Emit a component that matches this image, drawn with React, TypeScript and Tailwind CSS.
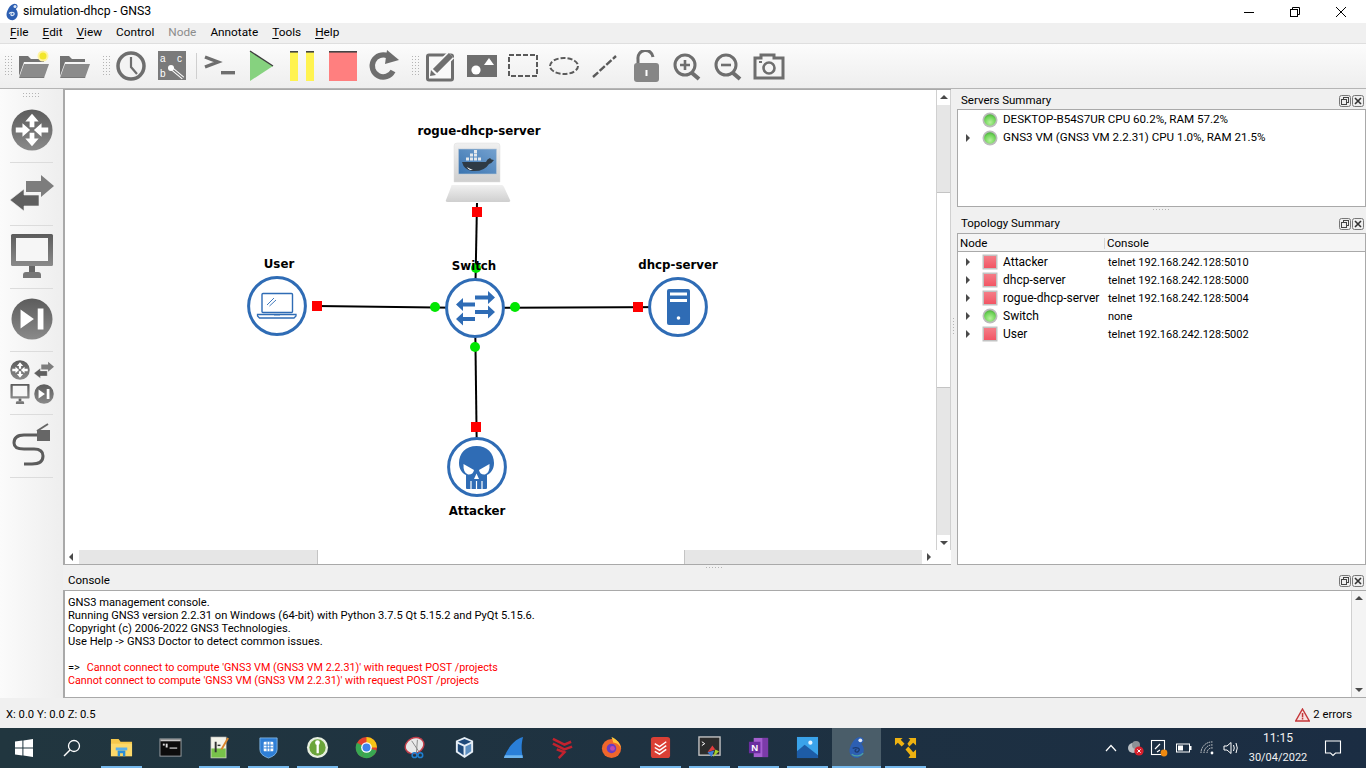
import type { ReactNode } from "react";

const GRAY = "#6e6e6e";
const BLUE = "#2f6cb5";

function Grip({ cols, rows }: { cols: number; rows: number }) {
  const dots: ReactNode[] = [];
  for (let c = 0; c < cols; c++)
    for (let r = 0; r < rows; r++) dots.push(<rect key={`${c}-${r}`} x={c * 3} y={r * 3} width="1" height="1" fill="#b4b4b4" />);
  return (
    <svg width={cols * 3} height={rows * 3} className="shrink-0">
      {dots}
    </svg>
  );
}

function Ico({ children, box = 32, size = 32 }: { children: ReactNode; box?: number; size?: number }) {
  return (
    <svg width={size} height={size} viewBox={`0 0 ${box} ${box}`} className="shrink-0">
      {children}
    </svg>
  );
}

/* ---------- toolbar icons ---------- */
const FolderShape = () => (
  <>
    <path d="M1 26 V6 H10 L13 9 H26 V12 H6 L1 26 Z" fill="#737373" />
    <path d="M6 14 H31 L26 28 H1 Z" fill="#8b8b8b" />
    <path d="M1.5 27.6 H26 L26.3 27 H2 Z" fill="#666" />
  </>
);

const toolbarIcons: Record<string, ReactNode> = {
  newProject: (
    <Ico>
      <FolderShape />
      <circle cx="25" cy="6" r="5.5" fill="#fff3a0" />
      <circle cx="25" cy="6" r="3.5" fill="#f2e62a" />
    </Ico>
  ),
  open: (
    <Ico>
      <FolderShape />
    </Ico>
  ),
  clock: (
    <Ico>
      <circle cx="16" cy="16" r="13" fill="#f3f3f3" stroke={GRAY} strokeWidth="3.5" />
      <path d="M16 7 V17 L22 24" fill="none" stroke={GRAY} strokeWidth="2.2" />
    </Ico>
  ),
  abc: (
    <Ico>
      <rect x="2" y="1" width="28" height="29" fill="#7a7a7a" />
      <text x="4" y="12" fontSize="10" fill="#fff" fontFamily="Liberation Sans">a</text>
      <text x="21" y="12" fontSize="10" fill="#fff" fontFamily="Liberation Sans">c</text>
      <text x="4" y="27" fontSize="10" fill="#fff" fontFamily="Liberation Sans">b</text>
      <path d="M15 18 L27 28" stroke="#fff" strokeWidth="3.5" />
      <path d="M15 18 L27 28" stroke="#7a7a7a" strokeWidth="1.4" />
      <circle cx="15" cy="18" r="3" fill="#fff" />
    </Ico>
  ),
  terminal: (
    <Ico>
      <path d="M2 7 L15 12 L2 17" fill="none" stroke={GRAY} strokeWidth="3.4" />
      <rect x="18" y="21" width="14" height="3.4" fill={GRAY} />
    </Ico>
  ),
  play: (
    <Ico>
      <polygon points="6,1 29,16 6,31" fill="#86d27f" />
      <path d="M6 1 L29 16" stroke="#3d3d3d" strokeWidth="1.3" />
    </Ico>
  ),
  pause: (
    <Ico>
      <rect x="5" y="1" width="8" height="30" fill="#fff350" />
      <rect x="21" y="1" width="8" height="30" fill="#fff350" />
      <rect x="5" y="1" width="8" height="1.6" fill="#444" />
      <rect x="21" y="1" width="8" height="1.6" fill="#444" />
    </Ico>
  ),
  stop: (
    <Ico>
      <rect x="3" y="1" width="28" height="30" fill="#ff7f7f" />
      <rect x="3" y="1" width="28" height="1.6" fill="#444" />
    </Ico>
  ),
  reload: (
    <Ico>
      <path d="M26 21 A11 11 0 1 1 21 6" fill="none" stroke={GRAY} strokeWidth="5.4" />
      <polygon points="20,0 32,10 18,14" fill={GRAY} />
    </Ico>
  ),
  note: (
    <Ico>
      <rect x="2.5" y="5" width="25" height="25" rx="1.5" fill="#f8f8f8" stroke={GRAY} strokeWidth="3" />
      <path d="M9 22 L26 5" stroke="#f8f8f8" strokeWidth="9" />
      <path d="M10 21 L26 5" stroke={GRAY} strokeWidth="6" />
      <polygon points="5,26 6,20 11,25" fill={GRAY} />
    </Ico>
  ),
  picture: (
    <Ico>
      <rect x="1" y="5" width="30" height="22" fill={GRAY} />
      <circle cx="10" cy="20" r="4.6" fill="#fff" />
      <polygon points="23,8 28,15 18,15" fill="#fff" />
    </Ico>
  ),
  rect: (
    <Ico>
      <rect x="2" y="5" width="28" height="21" fill="none" stroke="#5a5a5a" strokeWidth="2" strokeDasharray="5 2" />
    </Ico>
  ),
  ellipse: (
    <Ico>
      <ellipse cx="16" cy="16" rx="14" ry="8" fill="none" stroke="#5a5a5a" strokeWidth="2" strokeDasharray="5 2" />
    </Ico>
  ),
  line: (
    <Ico>
      <path d="M4 27 L27 6" fill="none" stroke="#5a5a5a" strokeWidth="2.4" strokeDasharray="7 2" />
    </Ico>
  ),
  lock: (
    <Ico>
      <path d="M8 15 V9 A7.5 7.5 0 0 1 23 7" fill="none" stroke={GRAY} strokeWidth="3" />
      <rect x="4" y="13" width="25" height="19" rx="3" fill="#868686" />
      <rect x="15.5" y="20" width="2" height="6" fill="#fff" />
    </Ico>
  ),
  zoomIn: (
    <Ico>
      <circle cx="14" cy="15" r="10" fill="#f5f5f5" stroke={GRAY} strokeWidth="3" />
      <path d="M21 23 L28 29" stroke={GRAY} strokeWidth="4" />
      <path d="M9 15 H19 M14 10 V20" stroke={GRAY} strokeWidth="2.6" />
    </Ico>
  ),
  zoomOut: (
    <Ico>
      <circle cx="14" cy="15" r="10" fill="#f5f5f5" stroke={GRAY} strokeWidth="3" />
      <path d="M21 23 L28 29" stroke={GRAY} strokeWidth="4" />
      <path d="M9 15 H19" stroke={GRAY} strokeWidth="2.6" />
    </Ico>
  ),
  camera: (
    <Ico>
      <path d="M2 8 H8 V5 H21 V8 H30 V28 H2 Z" fill="#f5f5f5" stroke={GRAY} strokeWidth="3" />
      <circle cx="16" cy="18" r="5.5" fill="none" stroke={GRAY} strokeWidth="2.6" />
      <rect x="6" y="11" width="3" height="2" fill={GRAY} />
    </Ico>
  ),
};

function ToolGroup({ names, className }: { names: string[]; className: string }) {
  return (
    <div className={`flex h-full ${className}`}>
      {names.map((n) => (
        <div key={n} className="flex h-full w-[41px] items-center justify-center">
          {toolbarIcons[n]}
        </div>
      ))}
    </div>
  );
}

/* ---------- left dock icons ---------- */
const DockDefs = () => (
  <svg width="0" height="0" className="absolute">
    <defs>
      <linearGradient id="dockGray" x1="0" y1="0" x2="0" y2="1">
        <stop offset="0" stopColor="#5c5c5c" />
        <stop offset="1" stopColor="#8a8a8a" />
      </linearGradient>
      <linearGradient id="lapBezel" x1="0" y1="0" x2="0" y2="1">
        <stop offset="0" stopColor="#f0f0f0" />
        <stop offset="1" stopColor="#cfcfcf" />
      </linearGradient>
      <linearGradient id="lapScreen" x1="0" y1="1" x2="1" y2="0">
        <stop offset="0" stopColor="#3a74b0" />
        <stop offset="1" stopColor="#74a1cf" />
      </linearGradient>
      <radialGradient id="ballGreen" cx="0.5" cy="0.7" r="0.8">
        <stop offset="0" stopColor="#b6f29c" />
        <stop offset="0.6" stopColor="#6fd458" />
        <stop offset="1" stopColor="#3a9c2e" />
      </radialGradient>
      <linearGradient id="squareRed" x1="0" y1="0" x2="0" y2="1">
        <stop offset="0" stopColor="#f47d87" />
        <stop offset="1" stopColor="#f25564" />
      </linearGradient>
    </defs>
  </svg>
);

function RouterGlyph({ size }: { size: number }) {
  return (
    <Ico box={44} size={size}>
      <circle cx="22" cy="22" r="21.5" fill="url(#dockGray)" />
      <g fill="#fff">
        <polygon points="22,5 29,13 24.5,13 24.5,19 19.5,19 19.5,13 15,13" />
        <polygon points="22,39 29,31 24.5,31 24.5,25 19.5,25 19.5,31 15,31" />
        <polygon points="20,22 12,15 12,19.5 5,19.5 5,24.5 12,24.5 12,29" />
        <polygon points="24,22 32,15 32,19.5 39,19.5 39,24.5 32,24.5 32,29" />
      </g>
    </Ico>
  );
}

function SwitchGlyph({ size }: { size: number }) {
  return (
    <Ico box={44} size={size}>
      <polygon points="16,10 31,10 31,4 44,15 31,26 31,21 16,21" fill="#7d7d7d" />
      <polygon points="0,29 14,18 14,24 29,24 29,35 14,35 14,40" fill="#5f5f5f" stroke="#f2f2f2" strokeWidth="0.6" />
    </Ico>
  );
}

function MonitorGlyph({ size }: { size: number }) {
  return (
    <Ico box={44} size={size}>
      <rect x="1" y="0" width="42" height="32" rx="1.5" fill="url(#dockGray)" />
      <rect x="6" y="4" width="32" height="23" fill="#f6f6f6" />
      <rect x="19" y="32" width="6" height="6" fill="#666" />
      <path d="M13 44 V41 Q13 38 16 38 H28 Q31 38 31 41 V44 Z" fill="#777" />
    </Ico>
  );
}

function EndGlyph({ size }: { size: number }) {
  return (
    <Ico box={44} size={size}>
      <circle cx="22" cy="22" r="21.5" fill="url(#dockGray)" />
      <polygon points="10,12 24,22 10,32" fill="#fff" />
      <rect x="28" y="11" width="6" height="22" fill="#fff" />
    </Ico>
  );
}

function CableGlyph() {
  return (
    <Ico box={44} size={44}>
      <path d="M28 12 H14 Q4 12 4 20 Q4 26 14 26 H24 Q33 26 33 33 Q33 41 22 41 H14" fill="none" stroke="#5c5c5c" strokeWidth="3" />
      <rect x="27" y="7" width="13" height="11" fill="#666" />
      <path d="M27 8 L38 1" stroke="#666" strokeWidth="2" />
    </Ico>
  );
}

function LeftDock() {
  const cell = "flex h-[63px] items-center justify-center border-b border-[#dcdcdc] pb-[2px]";
  return (
    <div className="flex w-[63px] shrink-0 flex-col bg-gradient-to-r from-[#fbfbfb] to-[#eeeeee]">
      <div className="flex h-[11px] items-center justify-center pt-[3px]">
        <Grip cols={6} rows={2} />
      </div>
      <div className="mx-[10px] flex flex-col">
        <div className={cell}>
          <RouterGlyph size={42} />
        </div>
        <div className={cell}>
          <SwitchGlyph size={44} />
        </div>
        <div className={cell}>
          <MonitorGlyph size={44} />
        </div>
        <div className={cell}>
          <EndGlyph size={42} />
        </div>
        <div className={cell}>
          <div className="grid grid-cols-2 gap-x-[4px] gap-y-[4px]">
            <RouterGlyph size={20} />
            <SwitchGlyph size={20} />
            <MonitorGlyph size={20} />
            <EndGlyph size={20} />
          </div>
        </div>
        <div className={cell}>
          <CableGlyph />
        </div>
      </div>
    </div>
  );
}

/* ---------- topology nodes ---------- */
function NodeRing({ children }: { children: ReactNode }) {
  return (
    <svg width="60" height="60" viewBox="0 0 60 60">
      <circle cx="30" cy="30" r="28.4" fill="#fff" stroke={BLUE} strokeWidth="3" />
      {children}
    </svg>
  );
}

const NodeSwitch = () => (
  <NodeRing>
    <g fill={BLUE}>
      <polygon points="30,17.5 43,17.5 43,13 50,19.5 43,26 43,21.5 30,21.5" />
      <polygon points="30,24.5 18,24.5 18,20 11,26.5 18,33 18,28.5 30,28.5" />
      <polygon points="30,32 43,32 43,27.5 50,34 43,40.5 43,36 30,36" />
      <polygon points="30,39 18,39 18,34.5 11,41 18,47.5 18,43 30,43" />
    </g>
  </NodeRing>
);

const NodeLaptop = () => (
  <NodeRing>
    <rect x="15" y="17.5" width="30.5" height="19" rx="1" fill="none" stroke={BLUE} strokeWidth="1.4" />
    <path d="M20 29 L27 22 M22.5 30 L29 24" stroke={BLUE} strokeWidth="0.9" />
    <path d="M10.5 38.5 H49 V40 L47 42 H12.5 L10.5 40 Z" fill="#fff" stroke={BLUE} strokeWidth="1.3" />
    <rect x="27" y="38" width="6" height="1.4" fill={BLUE} />
  </NodeRing>
);

const NodeServer = () => (
  <NodeRing>
    <rect x="19" y="12" width="23" height="36" rx="2" fill={BLUE} />
    <rect x="22" y="15.5" width="17" height="3" fill="#fff" />
    <rect x="22" y="22" width="17" height="3" fill="#fff" />
    <circle cx="30.5" cy="41" r="1.8" fill="#fff" />
  </NodeRing>
);

const NodeSkull = () => (
  <NodeRing>
    <path
      d="M29.5 9 C19 9 12 16 12 26 C12 32 15 36 19 38 V51 Q19 52 20 52 H39 Q40 52 40 51 V38 C44 36 47 32 47 26 C47 16 40 9 29.5 9 Z"
      fill={BLUE}
    />
    <path d="M16.5 27 L27 33 Q26 38 21 37.5 Q16 36 16.5 27 Z" fill="#fff" />
    <path d="M42.5 27 L32 33 Q33 38 38 37.5 Q43 36 42.5 27 Z" fill="#fff" />
    <path d="M29.5 36.5 L32 42 H27 Z" fill="#fff" />
    <path d="M24 44 V52 M29.5 44 V52 M35 44 V52" stroke="#fff" strokeWidth="1.2" />
  </NodeRing>
);

const DockerLaptop = () => (
  <svg width="66" height="62" viewBox="0 0 66 62">
    <path d="M12 1 H52 Q55 1 55 4 V40 H9 V4 Q9 1 12 1 Z" fill="url(#lapBezel)" stroke="#dcdcdc" strokeWidth="0.5" />
    <rect x="13.5" y="7" width="38" height="25" fill="url(#lapScreen)" stroke="#b9c8d8" strokeWidth="0.6" />
    <path d="M17 20 H41 Q42 17 45 16 Q46 18 49 18 Q47 21 44 22 Q39 30 27 29 Q19 28 17 20 Z" fill="#2e3a45" />
    <path d="M22 25 Q25 27 28 27.5 L25 28 Q23 27 22 25 Z" fill="#fff" />
    <g fill="#e4e8ec">
      <rect x="21" y="15.5" width="3" height="3" />
      <rect x="25" y="15.5" width="3" height="3" />
      <rect x="29" y="15.5" width="3" height="3" />
      <rect x="33" y="15.5" width="3" height="3" />
      <rect x="25" y="11.5" width="3" height="3" />
      <rect x="29" y="11.5" width="3" height="3" />
      <rect x="29" y="8" width="3" height="3" />
    </g>
    <path d="M7 43 H57 Q58 43 59 45 L65 58 Q66 60 63 60 H3 Q0 60 1 58 L6 45 Q6 43 7 43 Z" fill="url(#lapBezel)" />
  </svg>
);

function Wires() {
  const wires = [
    [412, 113, 410, 218],
    [252, 216, 410, 218],
    [410, 218, 613, 217],
    [410, 218, 412, 377],
  ];
  const reds = [
    [407, 117],
    [247, 211],
    [568, 212],
    [406, 332],
  ];
  const greens = [
    [411, 178],
    [370, 217],
    [450, 217],
    [410, 257],
  ];
  return (
    <svg width="871" height="460" className="absolute inset-0">
      {wires.map(([a, b, c, d], i) => (
        <line key={i} x1={a} y1={b} x2={c} y2={d} stroke="#000" strokeWidth="2" />
      ))}
      {reds.map(([x, y], i) => (
        <rect key={i} x={x} y={y} width="10" height="10" fill="#ff0000" />
      ))}
      {greens.map(([x, y], i) => (
        <circle key={i} cx={x} cy={y} r="5" fill="#00e600" />
      ))}
    </svg>
  );
}

function Arrow({ dir }: { dir: "up" | "down" | "left" | "right" }) {
  const pts = {
    up: "1,6 9,6 5,2",
    down: "1,3 9,3 5,7",
    left: "6,1 6,9 2,5",
    right: "3,1 3,9 7,5",
  }[dir];
  return (
    <svg width="10" height="10" viewBox="0 0 10 10">
      <polygon points={pts} fill="#4a4a4a" />
    </svg>
  );
}

function Canvas() {
  const label = "absolute -translate-x-1/2 whitespace-nowrap font-['DejaVu_Sans',sans-serif] text-[11.8px] leading-[16px] font-bold text-black";
  return (
    <div className="flex h-[476px] w-[888px] shrink-0 flex-col border-y border-l-2 border-[#a9a9a9] bg-white">
      <div className="flex h-[460px] shrink-0">
        <div className="relative w-[871px] shrink-0 overflow-hidden">
          <Wires />
          <div className="absolute top-[52px] left-[380px]">
            <DockerLaptop />
          </div>
          <div className="absolute top-[186px] left-[182px]">
            <NodeLaptop />
          </div>
          <div className="absolute top-[188px] left-[380px]">
            <NodeSwitch />
          </div>
          <div className="absolute top-[187px] left-[583px]">
            <NodeServer />
          </div>
          <div className="absolute top-[347px] left-[382px]">
            <NodeSkull />
          </div>
          <div className={`${label} top-[33px] left-[414px]`}>rogue-dhcp-server</div>
          <div className={`${label} top-[166px] left-[214px]`}>User</div>
          <div className={`${label} top-[168px] left-[409px]`}>Switch</div>
          <div className={`${label} top-[167px] left-[613px]`}>dhcp-server</div>
          <div className={`${label} top-[413px] left-[412px]`}>Attacker</div>
        </div>
        <div className="flex w-[15px] shrink-0 flex-col border-x border-[#d0d0d0] bg-[#e6e6e6]">
          <div className="flex h-[15px] items-center justify-center bg-white">
            <Arrow dir="up" />
          </div>
          <div className="h-[87px] shrink-0" />
          <div className="h-[196px] shrink-0 border-y border-[#c4c4c4] bg-white" />
          <div className="flex-1" />
          <div className="flex h-[15px] items-center justify-center bg-white">
            <Arrow dir="down" />
          </div>
        </div>
      </div>
      <div className="flex h-[14px] shrink-0 bg-[#e6e6e6]">
        <div className="flex w-[14px] items-center justify-center bg-white">
          <Arrow dir="left" />
        </div>
        <div className="w-[238px] shrink-0" />
        <div className="w-[368px] shrink-0 border-x border-[#c4c4c4] bg-white" />
        <div className="flex-1" />
        <div className="flex w-[14px] items-center justify-center bg-white">
          <Arrow dir="right" />
        </div>
        <div className="w-[15px] bg-white" />
      </div>
    </div>
  );
}

/* ---------- right side ---------- */
function PanelButtons() {
  return (
    <div className="flex gap-[1px]">
      <svg width="12" height="12" viewBox="0 0 12 12">
        <rect x="0.5" y="0.5" width="11" height="11" rx="2" fill="#eee" stroke="#777" />
        <rect x="4.5" y="2.5" width="5" height="5" fill="none" stroke="#444" />
        <rect x="2.5" y="4.5" width="5" height="5" fill="#eee" stroke="#444" />
      </svg>
      <svg width="12" height="12" viewBox="0 0 12 12">
        <rect x="0.5" y="0.5" width="11" height="11" rx="2" fill="#eee" stroke="#777" />
        <path d="M3 3 L9 9 M9 3 L3 9" stroke="#333" strokeWidth="1.6" />
      </svg>
    </div>
  );
}

function DockTitle({ title, cls }: { title: string; cls: string }) {
  return (
    <div className={`flex shrink-0 items-center justify-between pr-[2px] ${cls}`}>
      <span>{title}</span>
      <PanelButtons />
    </div>
  );
}

const Ball = () => (
  <svg width="16" height="16" viewBox="0 0 16 16">
    <circle cx="8" cy="8" r="7.5" fill="#bcbcbc" />
    <circle cx="8" cy="8" r="5.8" fill="url(#ballGreen)" />
  </svg>
);

const RedSquare = () => (
  <svg width="16" height="16" viewBox="0 0 16 16">
    <rect x="0.5" y="0.5" width="15" height="15" fill="#c2c2c2" />
    <rect x="2" y="2" width="12" height="12" fill="url(#squareRed)" />
  </svg>
);

function TreeRow({ arrow = true, icon, text, console: con }: { arrow?: boolean; icon: ReactNode; text: string; console?: string }) {
  return (
    <div className="flex h-[18px] items-center">
      <div className="flex w-[23px] shrink-0 justify-end pr-[8px]">{arrow && <Arrow dir="right" />}</div>
      <div className="w-[22px] shrink-0 pl-[1px]">{icon}</div>
      {con === undefined ? (
        <span className="text-[11.6px] whitespace-nowrap">{text}</span>
      ) : (
        <>
          <span className="w-[105px] shrink-0 text-[12px] whitespace-nowrap">{text}</span>
          <span className="text-[11px] whitespace-nowrap">{con}</span>
        </>
      )}
    </div>
  );
}

function RightDock() {
  const nodes = [
    { name: "Attacker", con: "telnet 192.168.242.128:5010", up: false },
    { name: "dhcp-server", con: "telnet 192.168.242.128:5000", up: false },
    { name: "rogue-dhcp-server", con: "telnet 192.168.242.128:5004", up: false },
    { name: "Switch", con: "none", up: true },
    { name: "User", con: "telnet 192.168.242.128:5002", up: false },
  ];
  return (
    <div className="flex h-[476px] flex-1 flex-col">
      <DockTitle title="Servers Summary" cls="h-[20px] pt-[3px] pl-[4px]" />
      <div className="h-[98px] shrink-0 border border-[#a9a9a9] bg-white pt-[1px]">
        <TreeRow arrow={false} icon={<Ball />} text="DESKTOP-B54S7UR CPU 60.2%, RAM 57.2%" />
        <TreeRow icon={<Ball />} text="GNS3 VM (GNS3 VM 2.2.31) CPU 1.0%, RAM 21.5%" />
      </div>
      <div className="flex h-[7px] shrink-0 items-center justify-center">
        <Grip cols={6} rows={1} />
      </div>
      <DockTitle title="Topology Summary" cls="h-[19px] pl-[4px]" />
      <div className="flex-1 border border-[#a9a9a9] bg-white">
        <div className="flex h-[18px] items-center border-b border-[#a9a9a9] bg-[#f5f5f5] pt-[2px]">
          <div className="w-[147px] border-r border-[#d5d5d5] pl-[2px]">Node</div>
          <div className="pl-[2px]">Console</div>
        </div>
        <div className="pt-[1px]">
          {nodes.map((n) => (
            <TreeRow key={n.name} icon={n.up ? <Ball /> : <RedSquare />} text={n.name} console={n.con} />
          ))}
        </div>
      </div>
    </div>
  );
}

function ConsolePanel() {
  const cannot = "Cannot connect to compute 'GNS3 VM (GNS3 VM 2.2.31)' with request POST /projects";
  return (
    <div className="flex flex-col">
      <DockTitle title="Console" cls="h-[18px] pl-[5px]" />
      <div className="flex h-[108px] border-y border-l-2 border-y-[#a9a9a9] border-l-[#a9a9a9] bg-white">
        <div className="flex-1 pt-[5px] pl-[3px] text-[11.15px] leading-[13px]">
          <div>GNS3 management console.</div>
          <div>Running GNS3 version 2.2.31 on Windows (64-bit) with Python 3.7.5 Qt 5.15.2 and PyQt 5.15.6.</div>
          <div>Copyright (c) 2006-2022 GNS3 Technologies.</div>
          <div>Use Help -&gt; GNS3 Doctor to detect common issues.</div>
          <div className="h-[13px]" />
          <div>
            =&gt; <span className="ml-[4px] text-[10.75px] text-[#ff0000]">{cannot}</span>
          </div>
          <div className="text-[10.75px] text-[#ff0000]">{cannot}</div>
        </div>
        <div className="flex w-[15px] flex-col justify-between border-l border-[#d0d0d0] bg-[#f4f4f4]">
          <div className="flex h-[15px] items-center justify-center">
            <Arrow dir="up" />
          </div>
          <div className="flex h-[15px] items-center justify-center">
            <Arrow dir="down" />
          </div>
        </div>
      </div>
    </div>
  );
}

/* ---------- taskbar ---------- */
const T = ({ children }: { children: ReactNode }) => (
  <svg width="23" height="23" viewBox="0 0 24 24">
    {children}
  </svg>
);

const taskIcons: { icon: ReactNode; open?: boolean; active?: boolean }[] = [
  {
    open: true,
    icon: (
      <T>
        <path d="M1 3 H9 L11 6 H23 V21 H1 Z" fill="#f5c84c" />
        <rect x="1" y="8" width="22" height="13" fill="#fcd96a" />
        <path d="M8 21 V15 H16 V21 H13.5 V18 H10.5 V21 Z" fill="#2b8fd8" />
        <rect x="6" y="12" width="12" height="3" fill="#5ab0ea" />
      </T>
    ),
  },
  {
    icon: (
      <T>
        <rect x="1" y="3" width="22" height="18" fill="#0c0c0c" stroke="#9aa0a4" strokeWidth="1" />
        <rect x="1.5" y="3.5" width="21" height="2" fill="#c8c8c8" />
        <rect x="4" y="8" width="2" height="2" fill="#ddd" />
        <rect x="7" y="8" width="2" height="4" fill="#ddd" />
        <rect x="11" y="12" width="8" height="1.2" fill="#ddd" />
      </T>
    ),
  },
  {
    open: true,
    icon: (
      <T>
        <rect x="3" y="1" width="16" height="22" fill="#f3f3ea" stroke="#9a9a9a" strokeWidth="0.6" />
        <rect x="3.5" y="13" width="15" height="9.5" fill="#78c24a" />
        <rect x="7" y="6" width="2" height="11" fill="#333" />
        <rect x="10" y="9" width="3" height="1.5" fill="#333" />
        <path d="M14 14 L21 2" stroke="#d9852c" strokeWidth="2" />
      </T>
    ),
  },
  {
    open: true,
    icon: (
      <T>
        <path d="M3 2 H21 V14 Q21 20 12 23 Q3 20 3 14 Z" fill="#2f7fd6" stroke="#8cc0ee" strokeWidth="0.8" />
        <rect x="7" y="6" width="10" height="10" rx="1" fill="#fff" />
        <path d="M7 9.5 H17 M7 12.5 H17 M10.5 6 V16 M13.5 6 V16" stroke="#2f7fd6" strokeWidth="1" />
      </T>
    ),
  },
  {
    open: true,
    icon: (
      <T>
        <circle cx="12" cy="12" r="11" fill="#e7efe0" />
        <circle cx="12" cy="12" r="8.5" fill="#6ba53a" />
        <circle cx="12" cy="7" r="2.5" fill="#fff" />
        <rect x="11" y="8" width="2.4" height="10" fill="#fff" />
      </T>
    ),
  },
  {
    icon: (
      <T>
        <circle cx="12" cy="12" r="11" fill="#e2412f" />
        <path d="M12 12 L22.5 15 A11 11 0 0 1 7 22 Z" fill="#38a852" />
        <path d="M12 12 L7 22 A11 11 0 0 1 2 7 Z" fill="#38a852" />
        <path d="M12 1 A11 11 0 0 1 23 12 L12 12 Z" fill="#f6c416" />
        <circle cx="12" cy="12" r="5.6" fill="#fff" />
        <circle cx="12" cy="12" r="4.2" fill="#3f83ea" />
      </T>
    ),
  },
  {
    icon: (
      <T>
        <ellipse cx="11" cy="10" rx="10" ry="8" fill="#e9e9e9" stroke="#c23e4a" strokeWidth="1.5" transform="rotate(-25 11 10)" />
        <path d="M8 5 L16 17 M14 4 L13 17" stroke="#888" strokeWidth="1" />
        <circle cx="17" cy="20" r="2.5" fill="none" stroke="#1f7fd0" strokeWidth="1.6" />
        <circle cx="11" cy="20" r="2.5" fill="none" stroke="#1f7fd0" strokeWidth="1.6" />
      </T>
    ),
  },
  {
    icon: (
      <T>
        <path d="M12 1 L21 5 V17 L12 23 L3 17 V5 Z" fill="#e6eef6" />
        <path d="M12 3 L19 6 L12 9 L5 6 Z" fill="#1f4a7a" />
        <path d="M5 8 L11 11 V20 L5 16 Z" fill="#1f4a7a" />
        <path d="M19 8 L13 11 V20 L19 16 Z" fill="#5d8fc0" />
      </T>
    ),
  },
  {
    icon: (
      <T>
        <path d="M2 23 C5 15 11 4 22 1 C20 8 20 16 22 23 Z" fill="#2a7fd8" />
        <path d="M3 20 H21.5 V23 H2 Z" fill="#6cb4ee" />
      </T>
    ),
  },
  {
    icon: (
      <T>
        <path d="M2 3 L14 9 L21 6 M2 8 L14 14 L22 11 M6 14 L14 17 L8 23" fill="none" stroke="#c2222e" strokeWidth="2.6" />
      </T>
    ),
  },
  {
    icon: (
      <T>
        <circle cx="12" cy="13" r="10" fill="#f0662c" />
        <path d="M12 1 C17 3 21 7 22 13 C20 8 16 7 14 7 Z" fill="#ffc53a" />
        <circle cx="12" cy="13" r="5" fill="#6a3cc0" />
        <circle cx="13" cy="13" r="2.5" fill="#c04ab0" />
      </T>
    ),
  },
  {
    open: true,
    icon: (
      <T>
        <rect x="2" y="1" width="20" height="22" rx="3" fill="#db4035" />
        <path d="M6 8 L11 11 L18 6 M6 12 L11 15 L18 10 M6 16 L11 19 L18 14" fill="none" stroke="#fff" strokeWidth="1.5" />
      </T>
    ),
  },
  {
    open: true,
    icon: (
      <T>
        <rect x="1" y="1" width="22" height="19" fill="#2c2c2c" stroke="#c8c8c8" strokeWidth="1.4" />
        <path d="M4 6 L7 8 L4 10" fill="none" stroke="#fff" strokeWidth="1" />
        <path d="M10 17 L15 10 L18 14 Z" fill="#e23c3c" />
        <path d="M14 22 L10 17 L17 15 Z" fill="#3d7fd8" />
        <path d="M18 14 L22 16 L16 22 Z" fill="#a6d22e" />
      </T>
    ),
  },
  {
    open: true,
    icon: (
      <T>
        <rect x="7" y="2" width="15" height="20" fill="#a55fd0" />
        <rect x="16" y="2" width="6" height="20" fill="#7b3ba8" />
        <rect x="2" y="6" width="12" height="12" fill="#6b2da0" />
        <text x="4.4" y="16" fontSize="10" fontWeight="700" fill="#fff" fontFamily="Liberation Sans">N</text>
      </T>
    ),
  },
  {
    open: true,
    icon: (
      <T>
        <rect x="1" y="1" width="22" height="22" fill="#3aa3ea" />
        <path d="M1 23 V16 L9 9 L23 20 V23 Z" fill="#1d5ca6" />
        <circle cx="15" cy="7" r="2.2" fill="#e4f3ff" />
      </T>
    ),
  },
  {
    open: true,
    active: true,
    icon: (
      <T>
        <path d="M15 1 C20 1 21 6 17 8 C21 12 21 21 13 23 C5 23 3 16 6 10 C8 6 10 2 15 1 Z" fill="#2d5fb2" />
        <circle cx="16" cy="4.5" r="2" fill="#dfe8f5" />
        <path d="M8 13 C12 11 17 13 14 16 C11 18 9 15 12 14" fill="none" stroke="#1d3c70" strokeWidth="1.4" />
        <path d="M7 19 C11 22 16 21 19 18" fill="none" stroke="#4fa0a0" strokeWidth="1.3" />
      </T>
    ),
  },
  {
    open: true,
    icon: (
      <T>
        <g fill="#eeb211">
          <polygon points="1,2 9,2 7,4 11,8 8,11 4,7 1,10" />
          <polygon points="23,2 15,2 17,4 14,8 16,11 20,7 23,10" />
          <polygon points="23,23 15,23 17,20 12,14 15,11 20,17 23,14" />
        </g>
      </T>
    ),
  },
];

function Taskbar() {
  return (
    <div className="flex h-[40px] shrink-0 items-stretch bg-gradient-to-r from-[#21363f] to-[#1b2d43] text-white">
      <div className="flex w-[47px] items-center justify-center">
        <svg width="18" height="18" viewBox="0 0 18 18">
          <path d="M0 2.6 L7.4 1.5 V8.4 H0 Z M8.4 1.4 L18 0 V8.4 H8.4 Z M0 9.4 H7.4 V16.4 L0 15.4 Z M8.4 9.4 H18 V18 L8.4 16.6 Z" fill="#fff" />
        </svg>
      </div>
      <div className="flex w-[50px] items-center justify-center">
        <svg width="18" height="18" viewBox="0 0 18 18">
          <circle cx="11" cy="7" r="5.5" fill="none" stroke="#fff" strokeWidth="1.3" />
          <path d="M7 11 L1 17" stroke="#fff" strokeWidth="1.4" />
        </svg>
      </div>
      {taskIcons.map((t, i) => (
        <div key={i} className={`flex w-[49px] shrink-0 flex-col ${t.active ? "bg-[#4a5d69]" : ""}`}>
          <div className="flex flex-1 items-center justify-center">{t.icon}</div>
          <div className={`h-[2px] ${t.active ? "" : "mx-[4px]"} ${t.open ? "bg-[#76b9ed]" : ""}`} />
        </div>
      ))}
      <div className="ml-auto flex items-center pr-[17px] text-[#f2f2f2]">
        <svg width="12" height="8" viewBox="0 0 12 8" className="mr-[9px]">
          <path d="M1 7 L6 1.5 L11 7" fill="none" stroke="#fff" strokeWidth="1.2" />
        </svg>
        <svg width="18" height="18" viewBox="0 0 18 18" className="mr-[6px]">
          <circle cx="7" cy="9" r="5" fill="#b9bec2" />
          <circle cx="10" cy="6" r="4" fill="#8c9196" />
          <circle cx="13" cy="12" r="4.6" fill="#d9202c" />
          <path d="M11.4 10.4 L14.6 13.6 M14.6 10.4 L11.4 13.6" stroke="#fff" strokeWidth="1" />
        </svg>
        <svg width="18" height="18" viewBox="0 0 18 18" className="mr-[8px]">
          <rect x="1.5" y="1.5" width="13" height="14" fill="none" stroke="#fff" strokeWidth="1.1" />
          <path d="M5 10 L10 5 M10 11 L7 13" stroke="#fff" strokeWidth="1.2" />
          <circle cx="14" cy="14" r="3.4" fill="#f08a10" />
        </svg>
        <svg width="16" height="16" viewBox="0 0 16 16" className="mr-[8px]">
          <rect x="0.5" y="4" width="13" height="8" fill="none" stroke="#fff" />
          <rect x="2" y="5.5" width="5" height="5" fill="#fff" />
          <rect x="14" y="6" width="1.5" height="4" fill="#fff" />
        </svg>
        <svg width="16" height="16" viewBox="0 0 16 16" className="mr-[7px]">
          <path d="M1 13 A11 11 0 0 1 13 2 M4 13 A8 8 0 0 1 13 5 M7 13 A5 5 0 0 1 13 8" fill="none" stroke="#d8d8d8" strokeWidth="1" strokeDasharray="1.5 .8" />
          <circle cx="12" cy="13" r="1.4" fill="#fff" />
        </svg>
        <svg width="16" height="16" viewBox="0 0 16 16">
          <path d="M1 6 H4 L8 2.5 V13.5 L4 10 H1 Z" fill="none" stroke="#fff" />
          <path d="M10.5 5 Q12 8 10.5 11 M13 3 Q15.5 8 13 13" fill="none" stroke="#fff" />
        </svg>
        <div className="flex w-[78px] flex-col items-center text-[11px] leading-[19px]">
          <span className="text-[12px]">11:15</span>
          <span>30/04/2022</span>
        </div>
        <div className="flex w-[32px] items-center justify-center">
          <svg width="18" height="18" viewBox="0 0 18 18">
            <path d="M1.5 2 H16.5 V14 H11.5 L9 16.5 L6.5 14 H1.5 Z" fill="none" stroke="#fff" strokeWidth="1.1" />
          </svg>
        </div>
      </div>
    </div>
  );
}

export default function App() {
  const u = (s: string) => <span className="underline underline-offset-2">{s}</span>;
  return (
    <div className="flex h-screen w-[1366px] flex-col overflow-hidden bg-[#f0f0f0] font-['Roboto',sans-serif] text-[11.5px] leading-none text-black">
      <DockDefs />
      {/* title bar */}
      <div className="flex h-[23px] shrink-0 items-center bg-white">
        <div className="flex w-[23px] justify-center">
          <svg width="18" height="18" viewBox="0 0 24 24">
            <path d="M15 1 C20 1 21 6 17 8 C21 12 21 21 13 23 C5 23 3 16 6 10 C8 6 10 2 15 1 Z" fill="#2d5fb2" />
            <circle cx="16" cy="4.5" r="2" fill="#dfe8f5" />
            <path d="M8 14 C12 11 17 13 14 16 C11 18 9 15 12 14" fill="none" stroke="#dbe6f2" strokeWidth="1.6" />
          </svg>
        </div>
        <span className="text-[12.25px]">simulation-dhcp - GNS3</span>
        <div className="ml-auto flex h-full pr-[2px]">
          <div className="flex w-[46px] items-center justify-center">
            <svg width="10" height="10" viewBox="0 0 10 10">
              <path d="M0 5.5 H10" stroke="#000" />
            </svg>
          </div>
          <div className="flex w-[46px] items-center justify-center">
            <svg width="10" height="10" viewBox="0 0 10 10">
              <rect x="0.5" y="2.5" width="7" height="7" fill="none" stroke="#000" />
              <path d="M2.5 2.5 V0.5 H9.5 V7.5 H7.5" fill="none" stroke="#000" />
            </svg>
          </div>
          <div className="flex w-[46px] items-center justify-center">
            <svg width="10" height="10" viewBox="0 0 10 10">
              <path d="M0 0 L10 10 M10 0 L0 10" stroke="#000" />
            </svg>
          </div>
        </div>
      </div>
      {/* menu */}
      <div className="flex h-[20px] shrink-0 items-center gap-[14px] pl-[10px] text-[11.8px]">
        <span>{u("F")}ile</span>
        <span>{u("E")}dit</span>
        <span>{u("V")}iew</span>
        <span>Control</span>
        <span className="text-[#8c8c8c]">Node</span>
        <span>Annotate</span>
        <span>{u("T")}ools</span>
        <span>{u("H")}elp</span>
      </div>
      {/* toolbar */}
      <div className="flex h-[46px] shrink-0 items-center border-y border-t-[#dfdfdf] border-b-[#b5b5b5] bg-gradient-to-b from-[#fcfcfc] to-[#eeeeee] pl-[5px]">
        <Grip cols={3} rows={7} />
        <ToolGroup names={["newProject", "open"]} className="ml-[-1px]" />
        <div className="ml-[8px]">
          <Grip cols={3} rows={7} />
        </div>
        <ToolGroup names={["clock", "abc"]} className="ml-[-2px]" />
        <div className="ml-[4px] h-[26px] w-px bg-[#cfcfcf]" />
        <ToolGroup names={["terminal", "play", "pause", "stop", "reload"]} className="ml-[1px]" />
        <div className="ml-[9px]">
          <Grip cols={3} rows={7} />
        </div>
        <ToolGroup names={["note", "picture", "rect", "ellipse", "line", "lock", "zoomIn", "zoomOut", "camera"]} className="ml-[-1px]" />
      </div>
      {/* main */}
      <div className="flex h-[609px] shrink-0">
        <LeftDock />
        <div className="flex w-[1303px] flex-col">
          <div className="flex">
            <Canvas />
            <div className="flex w-[6px] shrink-0 items-center justify-center">
              <Grip cols={1} rows={6} />
            </div>
            <RightDock />
          </div>
          <div className="flex h-[7px] shrink-0 items-center justify-center">
            <Grip cols={6} rows={1} />
          </div>
          <ConsolePanel />
        </div>
      </div>
      {/* status bar */}
      <div className="flex h-[30px] shrink-0 items-center justify-between pt-[3px] pr-[14px] pl-[6px] text-[11.25px]">
        <span>X: 0.0 Y: 0.0 Z: 0.5</span>
        <div className="flex items-center gap-[3px]">
          <svg width="15" height="14" viewBox="0 0 15 14">
            <path d="M7.5 1 L14.3 13 H0.7 Z" fill="#f6e0e0" stroke="#c4373a" strokeWidth="1.4" />
            <rect x="6.8" y="5" width="1.5" height="4.4" fill="#c4373a" />
            <rect x="6.8" y="10" width="1.5" height="1.5" fill="#c4373a" />
          </svg>
          <span>2 errors</span>
        </div>
      </div>
      <Taskbar />
    </div>
  );
}
